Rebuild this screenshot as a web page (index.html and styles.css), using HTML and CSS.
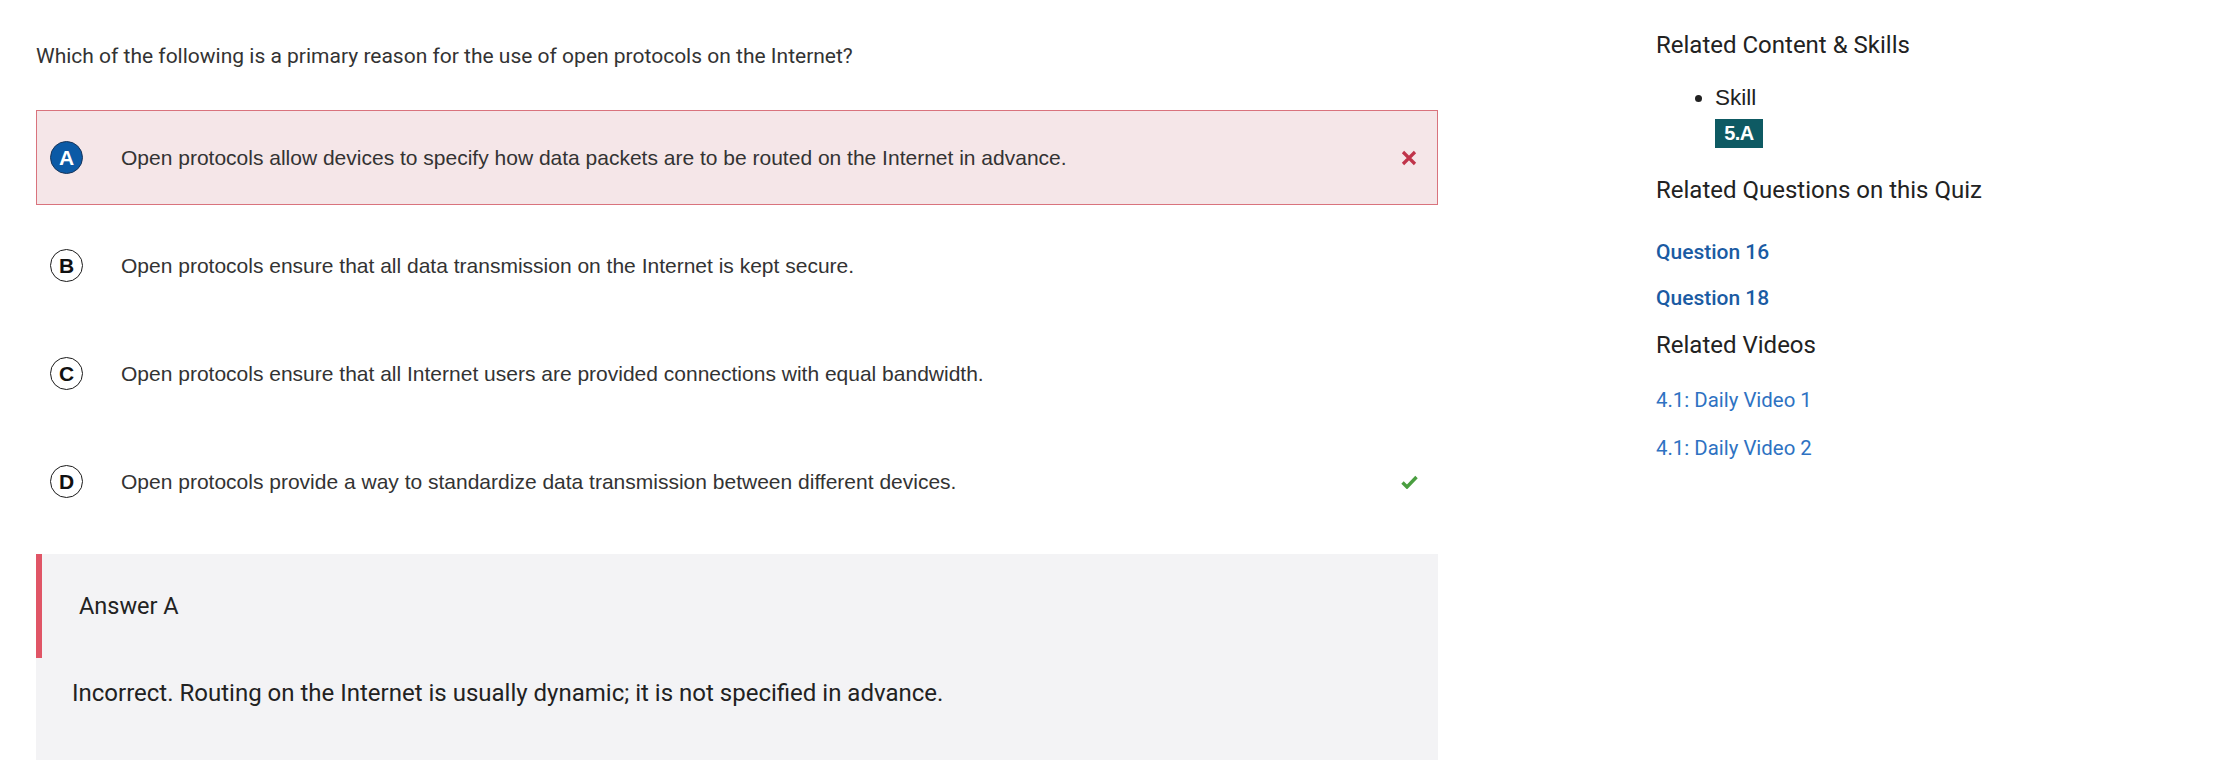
FILE: index.html
```html
<!DOCTYPE html>
<html lang="en">
<head>
<meta charset="utf-8">
<title>Quiz Question</title>
<link rel="stylesheet" href="styles.css">
</head>
<body>
<div class="page">
  <main class="main">
    <p class="question">Which of the following is a primary reason for the use of open protocols on the Internet?</p>
    <ul class="options">
      <li class="option option-wrong">
        <span class="letter letter-selected">A</span>
        <span class="option-text">Open protocols allow devices to specify how data packets are to be routed on the Internet in advance.</span>
        <span class="mark">
          <svg width="16" height="16" viewBox="0 0 16 16"><path d="M2 2 L14 14 M14 2 L2 14" stroke="#c0344a" stroke-width="3.2" fill="none"/></svg>
        </span>
      </li>
      <li class="option">
        <span class="letter">B</span>
        <span class="option-text">Open protocols ensure that all data transmission on the Internet is kept secure.</span>
        <span class="mark"></span>
      </li>
      <li class="option">
        <span class="letter">C</span>
        <span class="option-text">Open protocols ensure that all Internet users are provided connections with equal bandwidth.</span>
        <span class="mark"></span>
      </li>
      <li class="option">
        <span class="letter">D</span>
        <span class="option-text">Open protocols provide a way to standardize data transmission between different devices.</span>
        <span class="mark">
          <svg width="17" height="14" viewBox="0 0 17 14"><path d="M1.5 7.5 L6 12 L15.5 2" stroke="#4a9e40" stroke-width="3.4" fill="none"/></svg>
        </span>
      </li>
    </ul>
    <section class="answer">
      <div class="answer-head">Answer A</div>
      <p class="answer-body">Incorrect. Routing on the Internet is usually dynamic; it is not specified in advance.</p>
    </section>
  </main>
  <aside class="side">
    <h2 class="side-title t1">Related Content &amp; Skills</h2>
    <ul class="skills">
      <li class="skill">Skill</li>
    </ul>
    <span class="badge">5.A</span>
    <h2 class="side-title t2">Related Questions on this Quiz</h2>
    <a class="q-link q1" href="#">Question 16</a>
    <a class="q-link q2" href="#">Question 18</a>
    <h2 class="side-title t3">Related Videos</h2>
    <a class="v-link v1" href="#">4.1: Daily Video 1</a>
    <a class="v-link v2" href="#">4.1: Daily Video 2</a>
  </aside>
</div>
</body>
</html>
```

FILE: styles.css
```css
html, body {
  margin: 0;
  padding: 0;
  background: #ffffff;
}
body {
  font-family: Roboto, "Liberation Sans", Arial, sans-serif;
  color: #333333;
}
.page {
  display: flex;
  align-items: flex-start;
  padding-left: 36px;
}
.main {
  width: 1402px;
  flex: none;
}
.question {
  margin: 42px 0 0 0;
  font-size: 21px;
  line-height: 28px;
  color: #333333;
}
.options {
  list-style: none;
  margin: 40px 0 0 0;
  padding: 0;
}
.option {
  display: flex;
  align-items: center;
  height: 95px;
  margin-bottom: 13px;
  padding: 0 19px 0 13px;
  box-sizing: border-box;
  border: 1px solid transparent;
}
.option:last-child {
  margin-bottom: 25px;
}
.option-wrong {
  background: #f5e6e8;
  border-color: #d9737d;
}
.letter {
  flex: none;
  width: 33px;
  height: 33px;
  box-sizing: border-box;
  border: 1.8px solid #1a1a1a;
  border-radius: 50%;
  display: flex;
  align-items: center;
  justify-content: center;
  font-family: "Liberation Sans", Arial, sans-serif;
  font-weight: bold;
  font-size: 21px;
  color: #111111;
  background: #ffffff;
}
.letter-selected {
  background: #0b5aa6;
  border-color: #17355a;
  color: #ffffff;
}
.option-text {
  flex: 1;
  margin-left: 38px;
  font-family: "Liberation Sans", Arial, sans-serif;
  font-size: 21px;
  line-height: 26px;
  color: #333333;
}
.mark {
  flex: none;
  width: 18px;
  display: flex;
  align-items: center;
  justify-content: center;
}
.answer {
  background: #f3f3f5;
  height: 220px;
}
.answer-head {
  height: 104px;
  border-left: 6px solid #e05566;
  box-sizing: border-box;
  padding-left: 37px;
  display: flex;
  align-items: center;
  font-size: 23.5px;
  color: #222222;
}
.answer-body {
  margin: 20px 0 0 36px;
  font-size: 24px;
  line-height: 30px;
  color: #222222;
}
.side {
  margin-left: 218px;
  flex: none;
  display: flex;
  flex-direction: column;
  align-items: flex-start;
}
.side-title {
  margin: 0;
  font-weight: normal;
  font-size: 24px;
  line-height: 30px;
  color: #222222;
}
.t1 { margin-top: 30px; }
.t2 { margin-top: 27px; }
.t3 { margin-top: 17px; }
.skills {
  margin: 23px 0 0 0;
  padding-left: 59px;
  list-style: disc;
}
.skill {
  font-family: "Liberation Sans", Arial, sans-serif;
  font-size: 22.5px;
  line-height: 30px;
  color: #222222;
}
.badge {
  margin: 6px 0 0 59px;
  width: 48px;
  height: 29px;
  background: #0e5a63;
  color: #ffffff;
  font-family: "Liberation Sans", Arial, sans-serif;
  font-weight: bold;
  font-size: 20px;
  display: flex;
  align-items: center;
  justify-content: center;
  letter-spacing: -0.5px;
}
.q-link {
  font-size: 21px;
  font-weight: 500;
  line-height: 30px;
  color: #1a5ba3;
  text-decoration: none;
}
.q1 { margin-top: 32px; }
.q2 { margin-top: 16px; }
.v-link {
  font-size: 20.4px;
  line-height: 30px;
  color: #2e72c2;
  text-decoration: none;
}
.v1 { margin-top: 25px; }
.v2 { margin-top: 18px; }
```
